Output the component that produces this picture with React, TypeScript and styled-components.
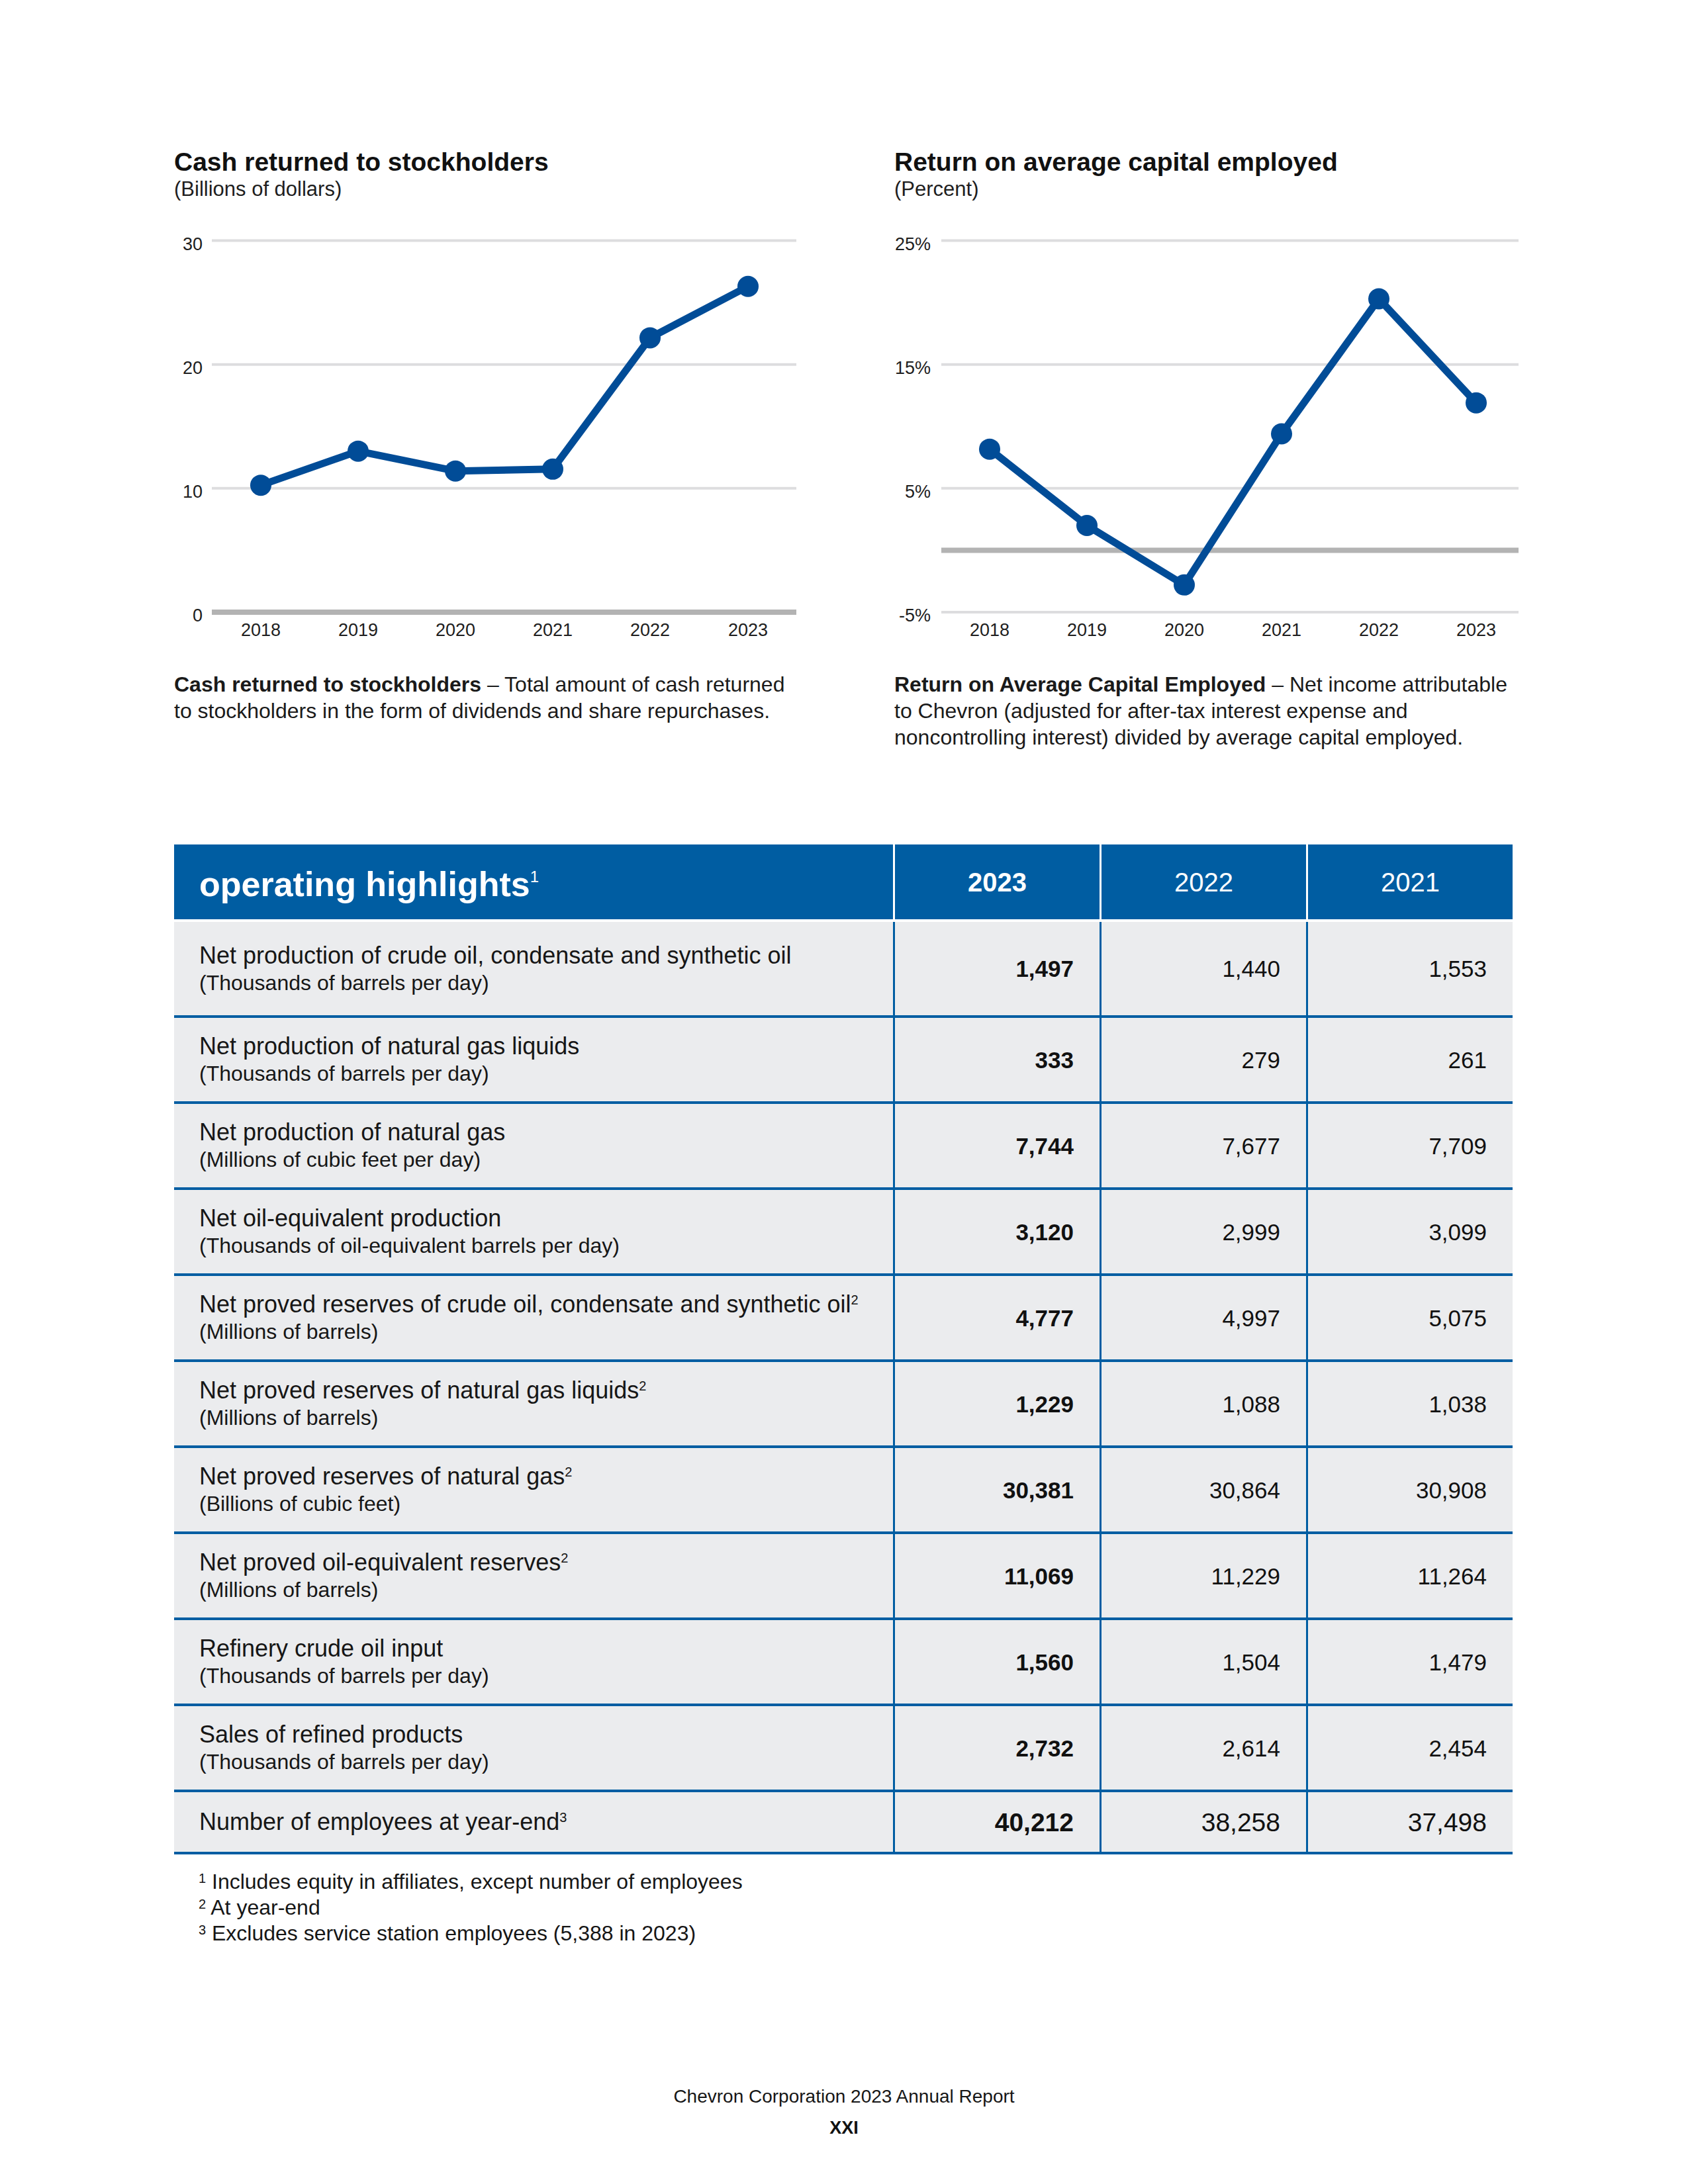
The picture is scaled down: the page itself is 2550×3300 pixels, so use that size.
import styled, { createGlobalStyle } from "styled-components";

const FONT = `"Liberation Sans", Arial, sans-serif`;
const BLUE = "#005da2";
const LINE_BLUE = "#014c97";

const GlobalStyle = createGlobalStyle`
  html, body {
    margin: 0;
    padding: 0;
    background: #ffffff;
  }
  body {
    font-family: ${FONT};
    color: #161616;
  }
`;

const Page = styled.div`
  box-sizing: border-box;
  width: 2550px;
  min-height: 3300px;
  padding: 222px 265px 68px 263px;
  display: flex;
  flex-direction: column;
  background: #ffffff;
`;

const ChartsRow = styled.div`
  display: grid;
  grid-template-columns: 1088px 960px;
  align-items: start;
`;

const ChartBlock = styled.section`
  display: flex;
  flex-direction: column;
`;

const ChartTitle = styled.h2`
  margin: 0;
  font: 700 39px/46px ${FONT};
  color: #111;
`;

const ChartUnit = styled.div`
  font: 400 31px/36px ${FONT};
  color: #1e1e1e;
`;

const ChartSvg = styled.svg`
  display: block;
  margin-top: 36px;
  overflow: visible;
`;

const AxisText = styled.text`
  font-family: ${FONT};
  font-size: 27px;
  fill: #1e1e1e;
`;

const Description = styled.p`
  margin: 34px 0 0;
  font: 400 32px/40px ${FONT};
  color: #1a1a1a;
`;

const Table = styled.div`
  margin-top: 142px;
  display: grid;
  grid-template-columns: 1086px repeat(3, 312px);
`;

const HeadLabel = styled.div`
  box-sizing: border-box;
  height: 117px;
  border-bottom: 4px solid #ffffff;
  background: ${BLUE};
  display: flex;
  align-items: center;
  padding: 6px 0 0 38px;
  color: #ffffff;
`;

const HeadTitle = styled.span`
  font: 700 52px/1 ${FONT};
`;

const HeadYear = styled.div<{ $bold?: boolean }>`
  box-sizing: border-box;
  height: 117px;
  border-bottom: 4px solid #ffffff;
  border-left: 3px solid #ffffff;
  background: ${BLUE};
  display: flex;
  align-items: center;
  justify-content: center;
  font: ${(p) => (p.$bold ? 700 : 400)} 40px/1 ${FONT};
  color: #ffffff;
`;

const LabelCell = styled.div<{ $h: number }>`
  box-sizing: border-box;
  height: ${(p) => p.$h}px;
  background: #ebecee;
  border-bottom: 4px solid ${BLUE};
  padding-left: 38px;
  display: flex;
  flex-direction: column;
  justify-content: center;
`;

const LabelMain = styled.div`
  font: 400 36px/42px ${FONT};
  color: #161616;
  white-space: nowrap;
`;

const LabelSub = styled.div`
  font: 400 32px/40px ${FONT};
  color: #161616;
  white-space: nowrap;
`;

const ValueCell = styled.div<{ $h: number; $bold?: boolean; $big?: boolean }>`
  box-sizing: border-box;
  height: ${(p) => p.$h}px;
  background: #ebecee;
  border-bottom: 4px solid ${BLUE};
  border-left: 3px solid ${BLUE};
  padding-right: 39px;
  display: flex;
  align-items: center;
  justify-content: flex-end;
  font: ${(p) => (p.$bold ? 700 : 400)} ${(p) => (p.$big ? 39 : 35)}px/1
    ${FONT};
  color: #111;
`;

const Sup = styled.span<{ $size: number; $lift: number }>`
  font-size: ${(p) => p.$size}px;
  font-weight: 400;
  line-height: 0;
  vertical-align: ${(p) => p.$lift}px;
`;

const Footnotes = styled.div`
  margin-top: 22px;
  padding-left: 37px;
  font: 400 32px/39px ${FONT};
  color: #161616;
`;

const Footer = styled.footer`
  margin-top: auto;
  display: flex;
  flex-direction: column;
  align-items: center;
  margin-right: -2px;
`;

const FooterLine = styled.div`
  font: 400 28px/34px ${FONT};
  color: #161616;
`;

const PageNumber = styled.div`
  margin-top: 13px;
  font: 700 27px/34px ${FONT};
  color: #111;
`;

type ChartProps = {
  labelRight: number;
  plotLeft: number;
  plotRight: number;
  min: number;
  max: number;
  ticks: number[];
  suffix?: string;
  yearX: number[];
  data: number[];
};

const YEARS = ["2018", "2019", "2020", "2021", "2022", "2023"];
const TOP = 23.5;
const BOTTOM = 585;

const LineChart = ({
  labelRight,
  plotLeft,
  plotRight,
  min,
  max,
  ticks,
  suffix = "",
  yearX,
  data,
}: ChartProps) => {
  const y = (v: number) => TOP + ((max - v) * (BOTTOM - TOP)) / (max - min);
  const points = data.map((v, i) => `${yearX[i]},${y(v)}`).join(" ");

  return (
    <ChartSvg width={960} height={640} viewBox="0 0 960 640">
      {ticks
        .filter((t) => t !== 0)
        .map((t) => (
          <line
            key={t}
            x1={plotLeft}
            x2={plotRight}
            y1={y(t)}
            y2={y(t)}
            stroke="#dddddf"
            strokeWidth={4}
          />
        ))}
      <line
        x1={plotLeft}
        x2={plotRight}
        y1={y(0)}
        y2={y(0)}
        stroke="#b3b3b3"
        strokeWidth={8}
      />
      {ticks.map((t) => (
        <AxisText key={t} x={labelRight} y={y(t) + 14} textAnchor="end">
          {t}
          {suffix}
        </AxisText>
      ))}
      {YEARS.map((yr, i) => (
        <AxisText key={yr} x={yearX[i]} y={621} textAnchor="middle">
          {yr}
        </AxisText>
      ))}
      <polyline
        points={points}
        fill="none"
        stroke={LINE_BLUE}
        strokeWidth={11}
        strokeLinejoin="round"
      />
      {data.map((v, i) => (
        <circle key={i} cx={yearX[i]} cy={y(v)} r={16} fill={LINE_BLUE} />
      ))}
    </ChartSvg>
  );
};

type Row = {
  label: string;
  note?: string;
  unit?: string;
  values: [string, string, string];
};

const ROWS: Row[] = [
  {
    label: "Net production of crude oil, condensate and synthetic oil",
    unit: "(Thousands of barrels per day)",
    values: ["1,497", "1,440", "1,553"],
  },
  {
    label: "Net production of natural gas liquids",
    unit: "(Thousands of barrels per day)",
    values: ["333", "279", "261"],
  },
  {
    label: "Net production of natural gas",
    unit: "(Millions of cubic feet per day)",
    values: ["7,744", "7,677", "7,709"],
  },
  {
    label: "Net oil-equivalent production",
    unit: "(Thousands of oil-equivalent barrels per day)",
    values: ["3,120", "2,999", "3,099"],
  },
  {
    label: "Net proved reserves of crude oil, condensate and synthetic oil",
    note: "2",
    unit: "(Millions of barrels)",
    values: ["4,777", "4,997", "5,075"],
  },
  {
    label: "Net proved reserves of natural gas liquids",
    note: "2",
    unit: "(Millions of barrels)",
    values: ["1,229", "1,088", "1,038"],
  },
  {
    label: "Net proved reserves of natural gas",
    note: "2",
    unit: "(Billions of cubic feet)",
    values: ["30,381", "30,864", "30,908"],
  },
  {
    label: "Net proved oil-equivalent reserves",
    note: "2",
    unit: "(Millions of barrels)",
    values: ["11,069", "11,229", "11,264"],
  },
  {
    label: "Refinery crude oil input",
    unit: "(Thousands of barrels per day)",
    values: ["1,560", "1,504", "1,479"],
  },
  {
    label: "Sales of refined products",
    unit: "(Thousands of barrels per day)",
    values: ["2,732", "2,614", "2,454"],
  },
  {
    label: "Number of employees at year-end",
    note: "3",
    values: ["40,212", "38,258", "37,498"],
  },
];

const rowHeight = (i: number) => {
  if (i === 0) return 145;
  if (i === ROWS.length - 1) return 94;
  return 130;
};

const App = () => {
  return (
    <Page>
      <GlobalStyle />
      <ChartsRow>
        <ChartBlock>
          <ChartTitle>Cash returned to stockholders</ChartTitle>
          <ChartUnit>(Billions of dollars)</ChartUnit>
          <LineChart
            labelRight={43}
            plotLeft={57}
            plotRight={940}
            min={0}
            max={30}
            ticks={[30, 20, 10, 0]}
            yearX={[131, 278, 425, 572, 719, 867]}
            data={[10.25, 13.0, 11.4, 11.55, 22.15, 26.3]}
          />
          <Description>
            <b>Cash returned to stockholders</b> – Total amount of cash returned
            <br />
            to stockholders in the form of dividends and share repurchases.
          </Description>
        </ChartBlock>
        <ChartBlock>
          <ChartTitle>Return on average capital employed</ChartTitle>
          <ChartUnit>(Percent)</ChartUnit>
          <LineChart
            labelRight={55}
            plotLeft={71}
            plotRight={943}
            min={-5}
            max={25}
            ticks={[25, 15, 5, -5]}
            suffix="%"
            yearX={[144, 291, 438, 585, 732, 879]}
            data={[8.16, 2.0, -2.8, 9.4, 20.3, 11.9]}
          />
          <Description>
            <b>Return on Average Capital Employed</b> – Net income attributable
            <br />
            to Chevron (adjusted for after-tax interest expense and
            <br />
            noncontrolling interest) divided by average capital employed.
          </Description>
        </ChartBlock>
      </ChartsRow>

      <Table>
        <HeadLabel>
          <HeadTitle>
            operating highlights
            <Sup $size={24} $lift={21}>
              1
            </Sup>
          </HeadTitle>
        </HeadLabel>
        <HeadYear $bold>2023</HeadYear>
        <HeadYear>2022</HeadYear>
        <HeadYear>2021</HeadYear>
        {ROWS.map((row, i) => {
          const h = rowHeight(i);
          const last = i === ROWS.length - 1;
          return [
            <LabelCell key={`l${i}`} $h={h}>
              <LabelMain>
                {row.label}
                {row.note && (
                  <Sup $size={20} $lift={12}>
                    {row.note}
                  </Sup>
                )}
              </LabelMain>
              {row.unit && <LabelSub>{row.unit}</LabelSub>}
            </LabelCell>,
            ...row.values.map((v, j) => (
              <ValueCell key={`v${i}-${j}`} $h={h} $bold={j === 0} $big={last}>
                {v}
              </ValueCell>
            )),
          ];
        })}
      </Table>

      <Footnotes>
        <div>
          <Sup $size={20} $lift={9}>
            1
          </Sup>{" "}
          Includes equity in affiliates, except number of employees
        </div>
        <div>
          <Sup $size={20} $lift={9}>
            2
          </Sup>{" "}
          At year-end
        </div>
        <div>
          <Sup $size={20} $lift={9}>
            3
          </Sup>{" "}
          Excludes service station employees (5,388 in 2023)
        </div>
      </Footnotes>

      <Footer>
        <FooterLine>Chevron Corporation 2023 Annual Report</FooterLine>
        <PageNumber>XXI</PageNumber>
      </Footer>
    </Page>
  );
};

export default App;
